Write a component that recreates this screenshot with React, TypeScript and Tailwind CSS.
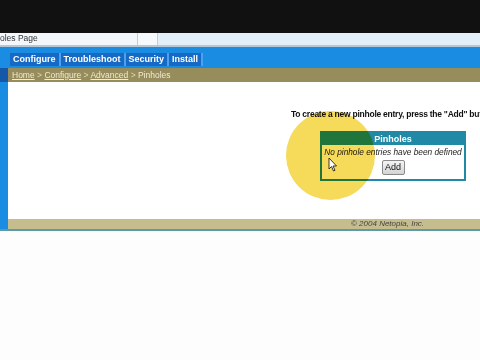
import React from "react";

export default function App() {
  const tabs = ["Configure", "Troubleshoot", "Security", "Install"];
  return (
    <div
      className="relative w-[480px] h-[360px] overflow-hidden bg-[#fdfdfd] flex flex-col"
      style={{ fontFamily: '"Liberation Sans", Arial, sans-serif' }}
    >
      {/* black top */}
      <div className="h-[33px] bg-[#111111] shrink-0" />
      {/* browser tab strip */}
      <div className="h-[12px] flex shrink-0 bg-[#e2eef8]">
        <div className="w-[137px] shrink-0 bg-[#f3f7fb] text-[8.5px] leading-[11px] text-[#333]">oles Page</div>
        <div className="w-[21px] shrink-0 border-x border-[#c4ccd4] bg-[#f6f9fc]" />
        <div className="flex-1" />
      </div>
      <div className="h-[2px] bg-[#b7c6d3] shrink-0" />
      {/* blue nav bar */}
      <div className="h-[21px] bg-[#1a8ce2] shrink-0 flex items-start pt-[6px] pl-[10px]">
        {tabs.map((t) => (
          <div
            key={t}
            className="h-[13px] px-[3px] bg-[#1769c6] border-r-2 border-[#4aa3ec] text-white font-bold text-[9px] leading-[13px] whitespace-nowrap"
          >
            {t}
          </div>
        ))}
      </div>
      {/* main row */}
      <div className="h-[161px] flex shrink-0">
        <div className="w-[8px] shrink-0 flex flex-col">
          <div className="h-[14px] bg-[#1558aa]" />
          <div className="flex-1 bg-[#1a8ce2]" />
        </div>
        <div className="flex-1 min-w-0 flex flex-col">
          <div className="h-[14px] bg-[#968c5c] pl-[4px] text-[8.5px] leading-[14px] text-[#f1ead0] whitespace-nowrap">
            <span className="underline">Home</span>
            <span className="text-[#e0d8a8]"> &gt; </span>
            <span className="underline">Configure</span>
            <span className="text-[#e0d8a8]"> &gt; </span>
            <span className="underline">Advanced</span>
            <span className="text-[#e0d8a8]"> &gt; </span>
            <span>Pinholes</span>
          </div>
          <div className="flex-1 bg-white overflow-hidden pt-[27px]">
            <div className="pl-[283px] whitespace-nowrap text-[8.5px] tracking-[-0.25px] font-bold text-[#111] leading-[10px]">
              To create a new pinhole entry, press the "Add" but
            </div>
            <div className="ml-[312px] mt-[12px] w-[146px] h-[50px] border-2 border-[#2089a6] bg-white flex flex-col">
              <div className="h-[12px] bg-[#2089a6] text-white font-bold text-[9px] leading-[12px] text-center">
                Pinholes
              </div>
              <div className="text-[8.3px] italic text-[#222] leading-[12px] text-center mt-[1px] whitespace-nowrap">
                No pinhole entries have been defined
              </div>
              <div className="flex justify-center mt-[2px]">
                <div className="w-[23px] h-[15px] border border-[#8a8a8a] rounded-[2px] bg-gradient-to-b from-[#f4f4f4] to-[#d4d4d4] text-[9px] leading-[13px] text-center text-[#111]">
                  Add
                </div>
              </div>
            </div>
          </div>
          <div className="h-[10px] bg-[#c6bd8e] pl-[343px] text-[8px] italic leading-[10px] text-[#444] whitespace-nowrap">
            © 2004 Netopia, Inc.
          </div>
        </div>
      </div>
      <div className="h-[2px] bg-[#5c9aa8] shrink-0" />
      <div className="flex-1 bg-[#fdfdfd]" />

      {/* yellow highlight */}
      <div className="absolute left-[286px] top-[111px] w-[89px] h-[89px] rounded-full bg-[#f6da5a] mix-blend-multiply" />
      {/* cursor */}
      <svg className="absolute left-[328px] top-[157px]" width="10" height="15" viewBox="0 0 10 15">
        <path d="M1 1 L1 12 L3.5 9.5 L5.5 14 L7 13.3 L5 9 L8.5 9 Z" fill="white" stroke="#222" strokeWidth="0.9" strokeLinejoin="round" />
      </svg>
    </div>
  );
}
